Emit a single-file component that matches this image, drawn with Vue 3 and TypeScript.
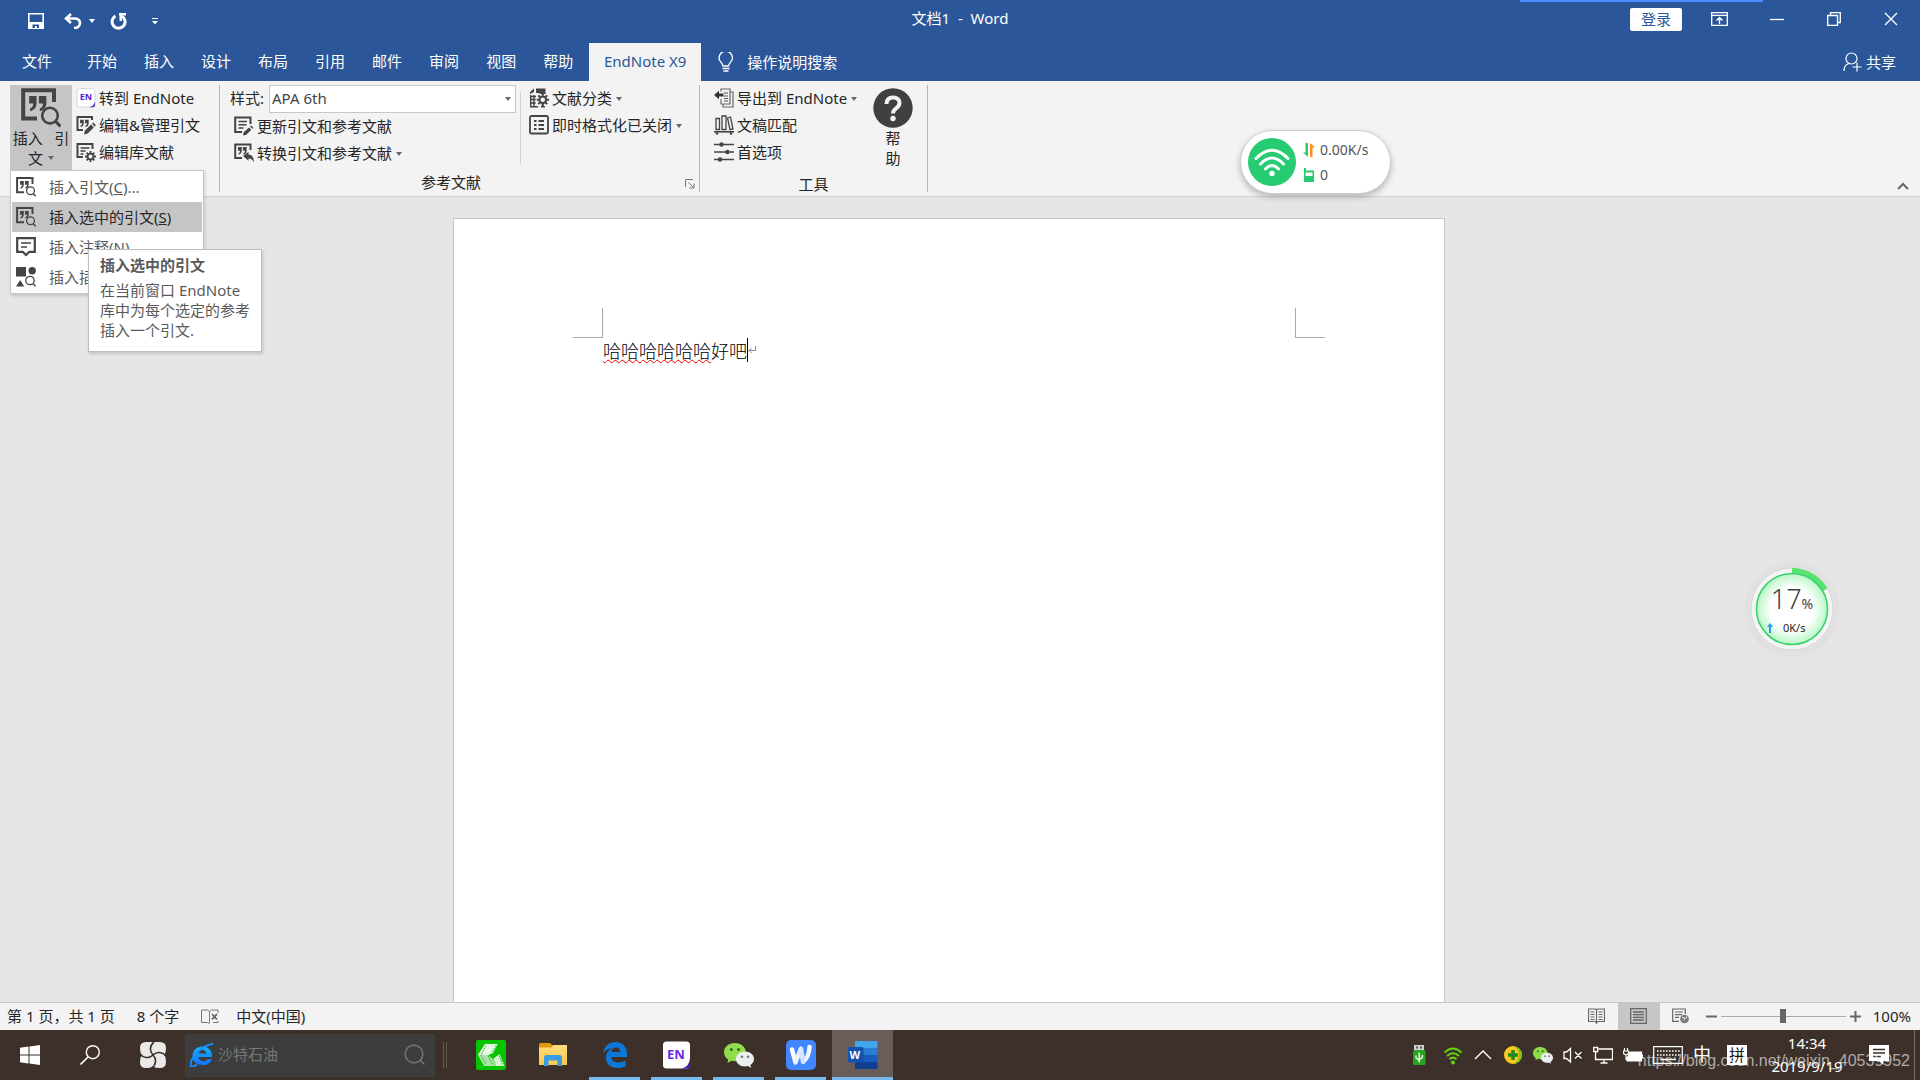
<script setup lang="ts">
import { ref } from 'vue'

interface Command {
  icon: string
  label: string
  menu?: boolean
  badge?: string
}

const tabs: string[] = ['开始', '插入', '设计', '布局', '引用', '邮件', '审阅', '视图', '帮助']

const citationCommands: Command[] = [
  { icon: 'endnote', label: '转到 EndNote', badge: 'EN' },
  { icon: 'quote-edit', label: '编辑&管理引文' },
  { icon: 'list-gear', label: '编辑库文献' },
]
const updateCommands: Command[] = [
  { icon: 'list-edit', label: '更新引文和参考文献' },
  { icon: 'quote-back', label: '转换引文和参考文献', menu: true },
]
const bibliographyCommands: Command[] = [
  { icon: 'category', label: '文献分类', menu: true },
  { icon: 'format-list', label: '即时格式化已关闭', menu: true },
]
const toolCommands: Command[] = [
  { icon: 'export', label: '导出到 EndNote', menu: true },
  { icon: 'books', label: '文稿匹配' },
  { icon: 'sliders', label: '首选项' },
]

const menuItems = [
  { icon: 'quote-search', label: '插入引文', key: 'C', tail: '...' },
  { icon: 'quote-search', label: '插入选中的引文', key: 'S', tail: '', active: true },
  { icon: 'note', label: '插入注释', key: 'N', tail: '' },
  { icon: 'figure', label: '插入插图', key: 'F', tail: '' },
]

const apps = [
  { icon: 'app-green', name: '剪辑' },
  { icon: 'app-folder', name: '文件资源管理器' },
  { icon: 'app-edge', name: 'Edge', open: true },
  { icon: 'app-endnote', name: 'EndNote', open: true, badge: 'EN' },
  { icon: 'app-wechat', name: '微信', open: true },
  { icon: 'app-w', name: 'WPS', open: true },
  { icon: 'app-word', name: 'Word', open: true, current: true, badge: 'W' },
]

const tray = ['t-usb', 't-wifi', 't-up', 't-shield', 'app-wechat', 't-mute', 't-net', 't-power']

const citationStyle = ref('APA 6th')
const zoom = ref(50)
const query = ref('沙特石油')
</script>

<template>
  <svg class="defs" aria-hidden="true">
    <defs>
      <radialGradient id="ballFill">
        <stop offset="0.6" stop-color="#fff" />
        <stop offset="1" stop-color="#b9f7c6" />
      </radialGradient>
      <linearGradient id="folderFill" x1="0" y1="0" x2="0" y2="1">
        <stop offset="0" stop-color="#ffdc7a" />
        <stop offset="1" stop-color="#fbc94a" />
      </linearGradient>
      <linearGradient id="ieFill" x1="0" y1="0" x2="0" y2="1">
        <stop offset="0" stop-color="#12b4ff" />
        <stop offset="1" stop-color="#1670ff" />
      </linearGradient>
      <linearGradient id="wFill" x1="0" y1="0" x2="1" y2="0">
        <stop offset="0" stop-color="#fff" />
        <stop offset="0.6" stop-color="#cfe2ff" />
        <stop offset="1" stop-color="#fff" />
      </linearGradient>
    </defs>

    <symbol id="quotes" viewBox="0 0 10 9">
      <path d="M0 0h4.2v4c0 2.500-1.200 4-3.700 4.600V7C1.800 6.500 2.300 5.600 2.300 4.200H0zM5.500 0h4.200v4c0 2.500-1.200 4-3.700 4.600V7c1.300-.5 1.800-1.400 1.800-2.800H5.500z" fill="#444" />
    </symbol>
    <symbol id="quote-search" viewBox="0 0 20 20">
      <path d="M16.500 7V1.100H1.100V15.200H8" fill="none" stroke="#444" stroke-width="2" />
      <use href="#quotes" x="4" y="4" width="9" height="8" />
      <circle cx="14.500" cy="13.800" r="3.900" fill="none" stroke="#444" stroke-width="1.300" />
      <path d="M17.300 16.700l2.400 2.500" stroke="#444" stroke-width="1.500" />
    </symbol>
    <symbol id="quote-edit" viewBox="0 0 20 20">
      <path d="M16 5V2H1.500V15H7" fill="none" stroke="#444" stroke-width="2" />
      <use href="#quotes" x="4" y="4.500" width="9" height="8" />
      <path d="M8 19.500l.8-3.800L15 9.600l2.800 2.800-6.100 6.200zM16 8.700l1.200-1.200 2.800 2.700-1.200 1.300z" fill="#444" />
    </symbol>
    <symbol id="quote-back" viewBox="0 0 20 20">
      <path d="M16.500 7V1.500H1.200V15H8" fill="none" stroke="#444" stroke-width="2" />
      <use href="#quotes" x="4" y="4" width="9" height="8" />
      <path d="M9 13l5.500-4.200v2.600c3.500 0 5.300 2.800 5.500 8-1.300-2.900-2.900-4-5.500-4v2.300z" fill="#444" />
    </symbol>
    <symbol id="list-edit" viewBox="0 0 20 20">
      <path d="M16.500 8V1.500H1.200V16H8" fill="none" stroke="#444" stroke-width="2" />
      <path d="M4.500 5.500h8.500M4.500 8.700h8M4.500 12h5" stroke="#444" stroke-width="1.500" />
      <path d="M9 19.500l.7-3.200 5.300-4.900 2.300 2.300-5 5zM16 10.500l1-1 2.300 2.300-1 1z" fill="#444" />
    </symbol>
    <symbol id="gear" viewBox="0 0 12 12">
      <circle cx="6" cy="6" r="3.200" fill="none" stroke="#444" stroke-width="2" />
      <path d="M6 0v2.200M6 9.800V12M0 6h2.200M9.800 6H12M1.800 1.800l1.500 1.500M8.700 8.700l1.500 1.500M1.800 10.200l1.500-1.500M8.700 3.300l1.500-1.500" stroke="#444" stroke-width="2" />
    </symbol>
    <symbol id="list-gear" viewBox="0 0 20 20">
      <path d="M16.500 7V2H1.500V15H7" fill="none" stroke="#444" stroke-width="2" />
      <path d="M4.500 6h9M4.500 9h5M4.500 12h3" stroke="#444" stroke-width="1.500" />
      <use href="#gear" x="9" y="9" width="11" height="11" />
    </symbol>
    <symbol id="category" viewBox="0 0 20 20">
      <path d="M1 6V4l4-3.500V4zM7 .5h9.500V6H12L9 5H7z" fill="#444" />
      <path d="M1.700 7v11.700H9M1.700 8.500H7M1.700 11.500h5M1.700 15h5M5 7v11.500M16 18.700H12" fill="none" stroke="#444" stroke-width="1.400" />
      <use href="#gear" x="7.500" y="5.500" width="12.500" height="12.500" />
    </symbol>
    <symbol id="format-list" viewBox="0 0 20 20">
      <rect x="1" y="1" width="18" height="17.500" rx="1.500" fill="none" stroke="#444" stroke-width="1.800" />
      <path d="M5 6h2.500M5 10h2.500M5 14h2.500M9.500 6H15M9.500 10H15M9.500 14H15" stroke="#444" stroke-width="1.900" />
    </symbol>
    <symbol id="export" viewBox="0 0 20 20">
      <path d="M7 3.500V1h9v15H7v-5M9 16v3h10V4h-3" fill="none" stroke="#666" stroke-width="1.200" />
      <path d="M10 5h4M10 8h4M10 10.500h4M10 13h4" stroke="#555" stroke-width="1.200" />
      <path d="M0 7l5-4.300v2.800h4.500v3H5v2.800z" fill="#333" />
    </symbol>
    <symbol id="books" viewBox="0 0 20 20">
      <path d="M2 3.500h3.500v11H2zM8 1h4v13.500H8zM13.500 3l3-1 2.500 12-3 .7z" fill="none" stroke="#444" stroke-width="1.300" />
      <path d="M0 16.800h20" stroke="#444" stroke-width="1.600" />
      <circle cx="3" cy="18.500" r="1.300" fill="#444" /><circle cx="17" cy="18.500" r="1.300" fill="#444" />
    </symbol>
    <symbol id="sliders" viewBox="0 0 20 20">
      <path d="M0 2.500h20M0 10h20M0 17.500h20" stroke="#444" stroke-width="1.500" />
      <circle cx="7.500" cy="2.500" r="2.200" fill="#444" /><circle cx="13.500" cy="10" r="2.200" fill="#444" /><circle cx="6" cy="17.500" r="2.200" fill="#444" />
    </symbol>
    <symbol id="endnote" viewBox="0 0 20 20">
      <rect x="1" y=".5" width="18" height="18.500" rx="2.500" fill="#fff" stroke="#d9d9d9" />
      <path d="M13 19.200c3.500-.5 5.500-2.200 6-6.200v3.500c0 1.700-1 2.700-2.500 2.700z" fill="#4a12c4" />
    </symbol>
    <symbol id="note" viewBox="0 0 20 20">
      <path d="M1.200 1.200h17.600v13.600h-5.500L10 18l-3.300-3.200H1.200z" fill="none" stroke="#444" stroke-width="2.200" />
      <path d="M5 6h10M5 10h6" stroke="#444" stroke-width="1.700" />
    </symbol>
    <symbol id="figure" viewBox="0 0 20 20">
      <path d="M0 0h10v9.500H0zM0 19.500L4.200 13l4 6.500z" fill="#444" />
      <circle cx="16.200" cy="3.700" r="3.700" fill="#444" />
      <circle cx="14" cy="13.500" r="4.200" fill="none" stroke="#444" stroke-width="1.300" />
      <path d="M17 16.700l2.600 2.600" stroke="#444" stroke-width="1.500" />
    </symbol>

    <symbol id="app-green" viewBox="0 0 30 30">
      <rect width="30" height="30" rx="2" fill="#07c400" />
      <path d="M9 4h12.500L17 13l-5 2 5 4 3 7H8L2 15z" fill="#a9e3a5" />
      <path d="M9 4h12.500L17 13l-5 2H2z" fill="#e4f9e2" />
      <path d="M17.500 18.500l6-4.500L28.500 26H20z" fill="#d5f5d2" />
      <path d="M10 5.500L5 15l5 9.500M20 5.500l-4 7.500M12 16l5 9M23 15.500l3.500 9" fill="none" stroke="#07a000" stroke-dasharray="1.500 1.200" stroke-width=".9" />
    </symbol>
    <symbol id="app-folder" viewBox="0 0 30 30">
      <path d="M1 4.500Q1 3 2.500 3H12l2.500 2.500L12 8H1z" fill="#e39a0b" />
      <path d="M1 7.500h11.500L15 5h14v20H1z" fill="url(#folderFill)" />
      <path d="M6 26V17.500Q6 15 8.500 15h13q2.500 0 2.500 2.500V26h-4.500v-5.500h-9V26z" fill="#3b9be0" />
    </symbol>
    <symbol id="app-edge" viewBox="0 0 30 30">
      <path d="M3 13.500C4 6.500 9 2 15.500 2 23 2 27 7.500 27 13.500V17H11.200c.3 4 3.500 5.500 7.300 5.500 2.800 0 5-.7 7-1.900v5.600C23.500 27.400 20.700 28 17.500 28 10.500 28 6 24 6 17.500c0-4 2.200-7.500 6.500-9.500C8.500 8.500 5 10 3 13.500zM11.300 12h8.900c0-2.800-1.300-4.500-4-4.500-2.600 0-4.500 1.700-4.900 4.500z" fill="#0b78d7" />
    </symbol>
    <symbol id="app-endnote" viewBox="0 0 30 30">
      <rect x="1" y="1.500" width="27" height="27" rx="3.500" fill="#fff" />
      <path d="M19.500 28.500c5-1 7.500-4 8.500-10v7q0 3-3 3z" fill="#4817b5" />
    </symbol>
    <symbol id="app-wechat" viewBox="0 0 30 30">
      <path d="M11 3C4.500 3 0 7 0 12.200c0 3 1.600 5.600 4.200 7.300L3.500 23l4-2.300c1.200.3 2.200.5 3.500.5 6 0 10.800-4 10.800-9S17 3 11 3z" fill="#8fdc4c" />
      <path d="M21 11.500c-5 0-9 3.300-9 7.500s4 7.500 9 7.500c1 0 2-.1 3-.4l3.200 1.900-.8-3c2.200-1.400 3.600-3.500 3.600-6 0-4.200-4-7.500-9-7.500z" fill="#eceff0" />
      <circle cx="7.300" cy="9.500" r="1.500" fill="#2c6a1c" /><circle cx="14.500" cy="9.500" r="1.500" fill="#2c6a1c" />
      <circle cx="18" cy="16.800" r="1.300" fill="#777" /><circle cx="24" cy="16.800" r="1.300" fill="#777" />
    </symbol>
    <symbol id="app-w" viewBox="0 0 30 30">
      <rect width="30" height="30" rx="5" fill="#4287ff" />
      <path d="M6 9.500l3.500 13L15 8.500l2 13.500Q23 17 23.500 7" fill="none" stroke="url(#wFill)" stroke-width="4.500" stroke-linejoin="round" stroke-linecap="round" />
    </symbol>
    <symbol id="app-word" viewBox="0 0 30 30">
      <path d="M7 1h22.500v7H7z" fill="#41a5ee" /><path d="M7 8h22.500v7H7z" fill="#2b7cd3" />
      <path d="M7 15h22.500v7H7z" fill="#185abd" /><path d="M7 22h22.500v7H7z" fill="#103f91" />
      <rect y="7" width="15.500" height="15.500" rx="1.300" fill="#1552ad" />
    </symbol>

    <symbol id="t-usb" viewBox="0 0 20 20">
      <path d="M5 0h10v5H5z" fill="#d0d0d0" /><path d="M7 1.500h2v2H7zM11 1.500h2v2h-2z" fill="#555" />
      <rect x="4" y="5" width="12.500" height="15" rx="1.500" fill="#26a620" />
      <path d="M10.200 7.500v10M7 10.500v2.500l3.200 2.200M13.400 10v2.500l-3.200 2.200" fill="none" stroke="#fff" stroke-width="1.300" />
    </symbol>
    <symbol id="t-wifi" viewBox="0 0 20 20">
      <path d="M1.500 7.500Q10-.5 18.500 7.500M4 11Q10 5.500 16 11M6.500 14.200Q10 11 13.500 14.200" fill="none" stroke="#62d20f" stroke-width="2" />
      <circle cx="10" cy="17.500" r="2" fill="#62d20f" />
    </symbol>
    <symbol id="t-up" viewBox="0 0 20 20">
      <path d="M2 14l8-8 8 8" fill="none" stroke="#fff" stroke-width="1.400" />
    </symbol>
    <symbol id="t-shield" viewBox="0 0 20 20">
      <circle cx="10" cy="10" r="9" fill="#ffc91c" />
      <path d="M10 1a9 9 0 0 1 0 18c5-3 6-6 6-9S15 3.500 10 1z" fill="#79c51d" />
      <path d="M10 5v10M5 10h10" stroke="#1b8a22" stroke-width="3.500" />
    </symbol>
    <symbol id="t-mute" viewBox="0 0 20 20">
      <path d="M1 7v6.500h2.500l4 3.500V3.500L3.500 7zM12 7l6.500 6.500M18.500 7L12 13.500" fill="none" stroke="#fff" stroke-width="1.300" />
    </symbol>
    <symbol id="t-net" viewBox="0 0 20 20">
      <path d="M5.500 4h14v10.500h-17V9M11 14.500V18M7.500 18h7M.7 2.500h4v4h-4zM2.700 6.500V9" fill="none" stroke="#fff" stroke-width="1.300" />
    </symbol>
    <symbol id="t-power" viewBox="0 0 20 20">
      <path d="M6.500 7h12v9H4v-4M18.500 10H20v3.500" fill="#fff" stroke="#fff" stroke-width="1.200" />
      <path d="M1.500 3v3M4.500 3v3M.5 6h5v2.500L3 10 .5 8.500zM3 10v5" fill="none" stroke="#fff" stroke-width="1.200" />
    </symbol>
  </svg>

  <div class="desktop">
    <header class="titlebar">
      <div class="quick">
        <button class="save" aria-label="保存">
          <svg width="16" height="16"><path d="M.8.8h14.400v14.400H.8z" fill="none" stroke="#fff" stroke-width="1.600" /><path d="M1 9h14v6H1z" fill="#fff" /><path d="M4.500 11.500H11V15H8.800v-2H7v2H4.500z" fill="#2b579a" /></svg>
        </button>
        <button class="undo" aria-label="撤消">
          <svg width="18" height="16"><path d="M7 1L2 5.500 7 10M2 5.500h8c4 0 6 2 6 4.500S14 15 10 15" fill="none" stroke="#fff" stroke-width="2.600" /></svg>
          <svg width="6" height="4"><path d="M0 0h6L3 4z" fill="#fff" /></svg>
        </button>
        <button class="redo" aria-label="重复">
          <svg width="18" height="17"><path d="M5.500 3A6.500 6.500 0 1 0 12 3.200" fill="none" stroke="#fff" stroke-width="3" /><path d="M9 1.300h7M10.700 1v7" fill="none" stroke="#fff" stroke-width="2.400" /></svg>
        </button>
        <button aria-label="自定义快速访问工具栏">
          <svg width="6" height="7"><path d="M0 .5h6" stroke="#fff" /><path d="M0 3h6L3 6.500z" fill="#fff" /></svg>
        </button>
      </div>
      <h1 class="doc-title">文档1&nbsp; -&nbsp; Word</h1>
      <div class="window-tools">
        <button class="login">登录</button>
        <button class="win" aria-label="功能区显示选项"><svg width="17" height="14"><path d="M.7.7h15.600v12.600H.7zM.7 3.300h15.600M8.500 12V6M5.500 8.500l3-3 3 3" fill="none" stroke="#fff" stroke-width="1.300" /></svg></button>
        <button class="win" aria-label="最小化"><svg width="14" height="14"><path d="M0 7.500h14" stroke="#fff" stroke-width="1.300" /></svg></button>
        <button class="win" aria-label="还原"><svg width="14" height="14"><path d="M.7 3.500h9.800v9.800H.7zM3.500 3V.7h9.800v9.800H11" fill="none" stroke="#fff" stroke-width="1.300" /></svg></button>
        <button class="win" aria-label="关闭"><svg width="14" height="14"><path d="M1 1l12 12M13 1L1 13" stroke="#fff" stroke-width="1.400" /></svg></button>
      </div>
    </header>
    <div class="accent"></div>

    <nav class="tabs">
      <button class="file">文件</button>
      <button v-for="t in tabs" :key="t" class="tab">{{ t }}</button>
      <button class="tab current">EndNote X9</button>
      <button class="tell">
        <svg width="16" height="20"><path d="M5 14c0-3-4-4-4-8a6.500 6.500 0 0 1 13.500 0c0 4-4 5-4 8z" fill="none" stroke="#fff" stroke-width="1.400" /><path d="M4.500 16.500h7M5.500 19h5" stroke="#fff" stroke-width="1.300" /></svg>
        操作说明搜索
      </button>
      <button class="share">
        <svg width="19" height="20"><circle cx="8.500" cy="6.500" r="5.500" fill="none" stroke="#fff" stroke-width="1.200" /><path d="M1 19c0-4 2-7 5.500-7.500M14 10.500v9M9.500 15h9" fill="none" stroke="#fff" stroke-width="1.200" /></svg>
        共享
      </button>
    </nav>

    <section class="ribbon">
      <div class="group citations">
        <div class="commands">
          <div class="anchor">
            <button class="big pressed">
              <svg width="40" height="40"><use href="#quote-search" /></svg>
              <span>插入&nbsp;&nbsp; 引</span>
              <span>文<svg class="caret" width="6" height="4"><path d="M0 0h6L3 4z" /></svg></span>
            </button>
            <div class="menu" role="menu">
              <button v-for="m in menuItems" :key="m.label" role="menuitem" :class="{ active: m.active }">
                <svg width="20" height="20"><use :href="'#' + m.icon" /></svg>
                <span>{{ m.label }}(<u>{{ m.key }}</u>){{ m.tail }}</span>
              </button>
            </div>
            <div class="tooltip" role="tooltip">
              <strong>插入选中的引文</strong>
              <p>在当前窗口 EndNote 库中为每个选定的参考插入一个引文.</p>
            </div>
          </div>
          <div class="column">
            <button v-for="c in citationCommands" :key="c.label" class="cmd">
              <span class="icon"><svg width="20" height="20"><use :href="'#' + c.icon" /></svg><b v-if="c.badge">{{ c.badge }}</b></span>{{ c.label }}
            </button>
          </div>
        </div>
      </div>

      <div class="group bibliography">
        <div class="commands">
          <div class="column">
            <div class="style-row">
              <label for="style">样式:</label>
              <div class="select">
                <select id="style" v-model="citationStyle"><option>APA 6th</option></select>
                <svg class="caret" width="6" height="4"><path d="M0 0h6L3 4z" /></svg>
              </div>
            </div>
            <button v-for="c in updateCommands" :key="c.label" class="cmd indent">
              <svg width="20" height="20"><use :href="'#' + c.icon" /></svg>{{ c.label }}
              <svg v-if="c.menu" class="caret" width="6" height="4"><path d="M0 0h6L3 4z" /></svg>
            </button>
          </div>
          <div class="column divided">
            <button v-for="c in bibliographyCommands" :key="c.label" class="cmd">
              <svg width="20" height="20"><use :href="'#' + c.icon" /></svg>{{ c.label }}
              <svg class="caret" width="6" height="4"><path d="M0 0h6L3 4z" /></svg>
            </button>
          </div>
        </div>
        <footer>
          <span>参考文献</span>
          <button aria-label="参考文献设置"><svg width="10" height="10"><path d="M.5 8V.5H8M3.500 3.500L8 8M9 4.500V9H4.500" fill="none" stroke="#777" /></svg></button>
        </footer>
      </div>

      <div class="group tools">
        <div class="commands">
          <div class="column">
            <button v-for="c in toolCommands" :key="c.label" class="cmd">
              <svg width="20" height="20"><use :href="'#' + c.icon" /></svg>{{ c.label }}
              <svg v-if="c.menu" class="caret" width="6" height="4"><path d="M0 0h6L3 4z" /></svg>
            </button>
          </div>
          <button class="big">
            <svg width="40" height="40"><circle cx="20" cy="20" r="19.700" fill="#404040" /><path d="M13.500 16c0-4.500 2.700-6.500 6.700-6.500s6.300 2.300 6.300 5.500c0 5.500-6.500 5-6.500 10.500" fill="none" stroke="#f3f3f3" stroke-width="4" /><circle cx="20" cy="30.500" r="2.700" fill="#f3f3f3" /></svg>
            <span>帮</span><span>助</span>
          </button>
        </div>
        <footer><span>工具</span></footer>
      </div>
      <button class="collapse" aria-label="折叠功能区"><svg width="12" height="8"><path d="M1 7l5-5 5 5" fill="none" stroke="#666" stroke-width="2" /></svg></button>
    </section>

    <main class="workspace">
      <article class="page">
        <div class="marks"><i class="mark left"></i><i class="mark right"></i></div>
        <p class="line"><span class="typo">哈哈哈哈哈哈</span>好吧<i class="cursor"></i><svg width="8" height="8"><path d="M7.500 0v4.500H1M3.500 2L1 4.500 3.500 7" fill="none" stroke="#888" /></svg></p>
      </article>
    </main>

    <footer class="status">
      <span>第 1 页，共 1 页</span>
      <span>8 个字</span>
      <svg width="18" height="16"><path d="M8.500 2.500v11.500M.5 1h6l2 1.500L10.500 1h6.500v3M.5 1v12.500h6l2 1.500M17 12v1.500h-5" fill="none" stroke="#777" /><path d="M11 5l5 5.500M16 5l-5 5.500" stroke="#666" stroke-width="1.800" /></svg>
      <span>中文(中国)</span>
      <div class="views">
        <button aria-label="阅读视图"><svg width="17" height="16"><path d="M8.500 1.500V16M.5 1h7l1 1 1-1h7v12.500h-7l-1 1-1-1h-7zM2.500 4h4M2.500 6.500h4M2.500 9h4M2.500 11.500h4M10.500 4h4M10.500 6.500h4M10.500 9h4M10.500 11.500h4" fill="none" stroke="#666" stroke-width="1.200" /></svg></button>
        <button class="on" aria-label="页面视图"><svg width="17" height="16"><path d="M.7.7h15.600v14.600H.7zM3 4h11M3 6.700h11M3 9.300h11M3 12h11" fill="none" stroke="#666" stroke-width="1.300" /></svg></button>
        <button aria-label="Web 版式视图"><svg width="17" height="16"><path d="M7 13.300H.7V1h12.600v5M3 4h8M3 6.700h7M3 9.300h4" fill="none" stroke="#666" stroke-width="1.200" /><circle cx="12.500" cy="11" r="4.300" fill="#777" /><path d="M10 9.500l3 .5-1 2.500M14.500 8.500v2" fill="none" stroke="#f3f3f3" /></svg></button>
      </div>
      <button class="step" aria-label="缩小"><svg width="11" height="11"><path d="M0 5.500h11" stroke="#666" stroke-width="2" /></svg></button>
      <input v-model="zoom" type="range" min="0" max="100" aria-label="缩放" />
      <button class="step" aria-label="放大"><svg width="11" height="11"><path d="M0 5.500h11M5.500 0v11" stroke="#666" stroke-width="2" /></svg></button>
      <span class="percent">100%</span>
    </footer>

    <footer class="taskbar">
      <button class="sys" aria-label="开始"><svg width="20" height="20"><path d="M0 2.800l8.500-1.200v7.900H0zM9.500 1.400L20 0v9.500H9.500zM0 10.500h8.500v7.900L0 17.200zM9.500 10.500H20V20L9.500 18.600z" fill="#fff" /></svg></button>
      <button class="sys" aria-label="搜索"><svg width="20" height="20"><circle cx="12.800" cy="7.200" r="6.500" fill="none" stroke="#fff" stroke-width="1.400" /><path d="M8 12L.5 19.500" stroke="#fff" stroke-width="1.600" /></svg></button>
      <button class="sys" aria-label="小工具"><svg width="26" height="26"><path d="M6 0h14q6 0 6 6 0 4-1.500 6.500Q26 16 26 20q0 6-6 6-4 0-7-1.500Q10 26 6 26q-6 0-6-6 0-4 1.500-7Q0 10 0 6q0-6 6-6z" fill="#ebe9e8" /><path d="M13 13C9 9 10 3 14 0M13 13c4-4 10-3 13 1M13 13c4 4 3 10-1 13M13 13C9 17 3 16 0 12" fill="none" stroke="#3c2f29" stroke-width="1.600" /></svg></button>
      <form class="finder" @submit.prevent>
        <svg width="24" height="24"><path d="M2.500 13.500C2.500 7 7 3.500 12.500 3.500S22 7.500 22 12.500V14H8.500c.3 3 2.200 4.300 5 4.300 2 0 3.300-.7 4-2.100h4.300C20.500 20 17.500 22 13.300 22c-6.300 0-10.800-3-10.800-8.500zM8.700 10.500h7.800c-.3-2.300-1.700-3.500-3.900-3.500s-3.600 1.200-3.900 3.500z" fill="url(#ieFill)" /><path d="M1 23.500C-1.500 19 8 3 23 .8M1 23.500c2 .5 4-.5 6-2" fill="none" stroke="#1592ff" stroke-width="1.700" /></svg>
        <input v-model="query" aria-label="网页搜索" />
        <svg width="22" height="22"><circle cx="10" cy="10" r="8.800" fill="none" stroke="#777" stroke-width="1.500" /><path d="M16.500 16.500l4 4" stroke="#777" stroke-width="1.600" /></svg>
      </form>
      <i class="grip"></i>
      <div class="apps">
        <button v-for="a in apps" :key="a.name" :aria-label="a.name" :class="{ open: a.open, now: a.current }">
          <span class="icon large"><svg width="30" height="30"><use :href="'#' + a.icon" /></svg><b v-if="a.badge" :class="{ word: a.current }">{{ a.badge }}</b></span>
        </button>
      </div>
      <div class="tray">
        <svg v-for="t in tray" :key="t" width="20" height="20"><use :href="'#' + t" /></svg>
        <svg width="30" height="18"><path d="M.7.700h28.600v16.600H.7z" fill="none" stroke="#fff" stroke-width="1.200" /><path d="M4 5h23M4 9h23" stroke="#fff" stroke-width="1.600" stroke-dasharray="1.600 1.400" /><path d="M7 13.500h16" stroke="#fff" stroke-width="1.400" /></svg>
        <span class="ime">中</span>
        <span class="ime pin">拼</span>
      </div>
      <time class="clock"><span>14:34</span><span>2019/9/19</span></time>
      <button class="notice" aria-label="通知"><svg width="20" height="20"><path d="M0 0h20v16h-5.500v4L10 16H0z" fill="#fff" /><path d="M4 4.500h12M4 8h12M4 11.500h8" stroke="#3c2f29" stroke-width="1.300" /></svg></button>
    </footer>

    <aside class="net">
      <svg width="48" height="48"><circle cx="24" cy="24" r="24" fill="#26cb72" /><path d="M8 20.500q16-16.500 32 0M12.500 26q11.500-12 23 0M17.500 31q6.500-7 13 0" fill="none" stroke="#fff" stroke-width="3" stroke-linecap="round" /><circle cx="24" cy="35.500" r="2.700" fill="#fff" /></svg>
      <div>
        <p><svg width="12" height="14"><path d="M5 0v14L0 9.500h2.500V0z" fill="#26cb72" /><path d="M7 14V0l5 4.500H9.500V14z" fill="#ff8a1e" /></svg>0.00K/s</p>
        <p><svg width="12" height="14"><path d="M1 2.500V0h2v2.500h8V14H1z" fill="#26cb72" /><path d="M2.500 4.500h7V8h-7z" fill="#fff" /></svg>0</p>
      </div>
    </aside>

    <aside class="ball">
      <svg width="98" height="98">
        <circle cx="49" cy="49" r="48" fill="#000" fill-opacity=".02" />
        <circle cx="49" cy="49" r="41" fill="#f4f4f4" stroke="#d8d8d8" />
        <path d="M49 10.500A38.500 38.500 0 0 1 82.300 29.800" fill="none" stroke="#58e36d" stroke-width="5" />
        <circle cx="49" cy="49" r="35.500" fill="url(#ballFill)" stroke="#35cf6b" stroke-width="1.500" />
      </svg>
      <div class="reading">
        <p class="load">17<small>%</small></p>
        <p class="rate"><svg width="6" height="10"><path d="M3 0l3 4H4v6H2V4H0z" fill="#3296fa" /></svg>0K/s</p>
      </div>
    </aside>
    <p class="watermark">https://blog.csdn.net/weixin_40539952</p>
  </div>
</template>

<style>
body { overflow: hidden; }
</style>

<style scoped>
* { box-sizing: border-box; }
.defs { position: absolute; width: 0; height: 0; }
.desktop {
  position: relative;
  display: flex;
  flex-direction: column;
  height: 100vh;
  overflow: hidden;
  background: #e6e6e6;
  color: #262626;
  font: 15px/20px "Noto Sans", "Noto Sans CJK SC", sans-serif;
}
button {
  display: flex;
  align-items: center;
  padding: 0;
  border: 0;
  background: none;
  color: inherit;
  font: inherit;
  white-space: nowrap;
}
p, h1 { margin: 0; }
svg { display: block; flex: none; }
.caret { fill: #666; }
.icon { display: grid; }
.icon > * { grid-area: 1 / 1; }
.icon b { align-self: center; justify-self: center; padding-bottom: 2px; color: #5a1fe0; font-size: 9px; line-height: 12px; }
.large b { padding-right: 1px; color: #6a2bea; font-size: 13px; line-height: 16px; }
.large .word { justify-self: start; padding: 0 0 1px 2px; color: #fff; font-size: 11px; }

.titlebar {
  display: grid;
  grid-template-columns: 1fr auto 1fr;
  height: 43px;
  background: #2b579a;
  color: #fff;
}
.quick { display: flex; align-items: center; height: 42px; padding-left: 28px; }
.save { margin-right: 20px; }
.undo { gap: 7px; margin-right: 15px; }
.redo { margin-right: 24px; }
.doc-title { font-size: 15px; font-weight: 400; line-height: 36px; }
.window-tools { display: flex; justify-content: flex-end; height: 38px; padding-right: 1px; align-items: center; }
.login { height: 23px; padding: 0 11px; margin-right: 9px; border-radius: 2px; background: #fff; color: #2b579a; }
.win { justify-content: center; width: 57px; height: 38px; }
.accent { position: absolute; top: 0; right: 157px; width: 243px; height: 2px; background: #4a8cff; }

.tabs { display: flex; height: 38px; background: #2b579a; color: #fff; }
.tabs button { padding-bottom: 3px; }
.file { padding: 0 22px; }
.tab { padding: 0 13px; margin-right: 1px; }
.current { justify-content: center; min-width: 112px; margin-left: 2px; background: #f3f3f3; color: #2b579a; }
.tabs .tell { gap: 13px; margin-left: 16px; padding-bottom: 1px; }
.tabs .share { gap: 4px; margin-left: auto; padding-right: 24px; padding-bottom: 1px; }

.ribbon { display: flex; height: 116px; padding-top: 4px; background: #f3f3f3; border-bottom: 1px solid #d2d2d2; }
.group { display: flex; flex-direction: column; height: 107px; border-right: 1px solid #b4b4b4; }
.commands { display: flex; height: 85px; }
.group footer { display: flex; align-items: center; height: 20px; margin-top: 4px; }
.group footer span { flex: 1; text-align: center; }
.citations { width: 220px; padding-left: 10px; }
.bibliography { width: 480px; padding: 0 4px 0 10px; }
.bibliography footer span { padding-right: 13px; }
.bibliography footer button { margin-top: 3px; }
.tools { width: 228px; padding-left: 14px; }
.tools footer { padding-right: 14px; }
.anchor { position: relative; }
.big { flex-direction: column; width: 62px; height: 85px; padding-top: 3px; }
.big span { display: flex; align-items: center; gap: 5px; height: 20px; }
.tools .big { width: 40px; margin-left: auto; margin-right: 14px; }
.pressed { background: #c5c5c5; }
.column { display: flex; flex-direction: column; }
.citations .column { padding-left: 4px; }
.cmd { gap: 3px; height: 27px; padding-bottom: 2px; }
.cmd .caret { margin: 2px 0 0 1px; }
.indent { padding-left: 4px; }
.divided { height: 72px; margin: 7px 0 0 4px; padding-left: 8px; border-left: 1px solid #d2d2d2; }
.divided .cmd:first-child { margin-top: -7px; }
.style-row { display: flex; align-items: center; gap: 5px; height: 28px; }
.style-row label { padding-bottom: 2px; }
.select { display: grid; align-items: center; width: 247px; height: 28px; background: #fff; border: 1px solid #c6c6c6; }
.select > * { grid-area: 1 / 1; }
.select select { appearance: none; width: 100%; padding: 0 2px 3px; border: 0; background: none; color: #444; font: inherit; }
.select .caret { justify-self: end; margin-right: 4px; }
.collapse { margin: auto 11px 6px auto; }

.menu {
  position: absolute;
  z-index: 2;
  top: 85px;
  left: 0;
  width: 194px;
  padding: 1px;
  background: #fff;
  border: 1px solid #c6c6c6;
  box-shadow: 1px 2px 3px rgba(0, 0, 0, 0.15);
  color: #5a5a5a;
}
.menu button { gap: 13px; width: 100%; height: 30px; padding: 0 0 1px 4px; }
.menu button.active { background: #c5c5c5; color: #262626; }
.tooltip {
  position: absolute;
  z-index: 3;
  top: 164px;
  left: 78px;
  width: 174px;
  padding: 5px 10px 11px 11px;
  background: #fff;
  border: 1px solid #bebebe;
  box-shadow: 1px 2px 3px rgba(0, 0, 0, 0.15);
  color: #5a5a5a;
}
.tooltip p { margin-top: 5px; }

.workspace { display: flex; flex: 1; justify-content: center; min-height: 0; padding: 21px 22px 0 0; }
.page { width: 992px; padding-top: 89px; background: #fff; border: 1px solid #c6c6c6; border-bottom: 0; }
.marks { display: flex; justify-content: space-between; padding: 0 119px; }
.mark { width: 30px; height: 30px; border-bottom: 1px solid #aaa; }
.mark.left { border-right: 1px solid #aaa; }
.mark.right { border-left: 1px solid #aaa; }
.line { display: flex; align-items: center; height: 24px; padding-left: 149px; color: #000; font-size: 18px; line-height: 24px; font-weight: 300; font-family: "Noto Sans CJK SC", sans-serif; }
.typo { text-decoration: underline wavy #e00 1px; text-underline-offset: 1px; }
.cursor { width: 1px; height: 24px; background: #000; }

.status { display: flex; align-items: center; height: 28px; padding: 0 9px 0 7px; background: #f3f3f3; border-top: 1px solid #c6c6c6; }
.status > span { margin-right: 22px; padding-bottom: 2px; }
.status > svg { margin-right: 17px; }
.views { display: flex; height: 27px; margin-left: auto; margin-right: 4px; }
.views button { justify-content: center; width: 42px; padding-bottom: 1px; }
.views .on { background: #c6c6c6; }
.step { width: 11px; padding-bottom: 1px; }
.status input { appearance: none; width: 125px; height: 14px; margin: 0 4px 1px; background: linear-gradient(#aaa, #aaa) center / 100% 1px no-repeat; }
.status input::-webkit-slider-thumb { appearance: none; width: 6px; height: 14px; background: #666; }
.status .percent { margin: 0 0 0 12px; }

.taskbar { display: flex; align-items: center; height: 50px; background: #3d302a; color: #fff; }
.sys { justify-content: center; width: 60px; height: 50px; }
.sys:nth-child(3) { width: 65px; }
.finder { display: flex; align-items: center; gap: 4px; width: 250px; height: 43px; padding: 0 9px 0 5px; background: #3d3d3d; }
.finder input { flex: 1; min-width: 0; padding: 0 0 2px; border: 0; background: none; color: #777; font: inherit; }
.grip { width: 4px; height: 26px; margin: 0 12px 0 8px; border: 1px solid #665b56; border-width: 0 1px; }
.apps { display: flex; }
.apps button { justify-content: center; width: 51px; height: 50px; margin: 0 5px 0 6px; padding-top: 3px; border-bottom: 3px solid transparent; }
.apps .open { border-color: #76b9ed; }
.apps .now { width: 61px; margin: 0 0 0 1px; background: #685d58; }
.tray { display: flex; align-items: center; gap: 10px; margin-left: auto; }
.tray svg:first-child { margin-right: 4px; }
.ime { width: 18px; padding-bottom: 2px; font-size: 18px; text-align: center; }
.pin { width: 20px; height: 20px; margin-left: 6px; padding: 0; background: #fff; color: #111; font-size: 16px; }
.clock { display: flex; flex-direction: column; width: 80px; margin-left: 20px; line-height: 23px; text-align: center; }
.notice { height: 50px; margin-left: 22px; padding-right: 25px; margin-right: 5px; border-right: 1px solid #776e69; }

.net {
  position: absolute;
  top: 130px;
  right: 529px;
  display: flex;
  align-items: center;
  gap: 7px;
  width: 151px;
  height: 64px;
  padding-left: 7px;
  background: #fff;
  border: 1px solid #cdcdcd;
  border-radius: 32px;
  box-shadow: 0 3px 6px rgba(0, 0, 0, 0.25);
  color: #555;
  font-size: 14px;
}
.net p { display: flex; align-items: center; gap: 5px; height: 25px; }
.ball { position: absolute; top: 560px; right: 79px; display: grid; }
.ball > * { grid-area: 1 / 1; }
.reading { padding-top: 22px; color: #444; text-align: center; }
.load { font-size: 27px; line-height: 34px; font-weight: 300; }
.load small { font-size: 14px; font-weight: 400; }
.rate { display: flex; align-items: center; gap: 10px; padding-left: 24px; color: #222; font-size: 11px; line-height: 14px; }
.watermark { position: absolute; right: 10px; bottom: 9px; color: rgba(255, 255, 255, 0.6); font: 16px/20px "Liberation Sans", sans-serif; }
</style>
